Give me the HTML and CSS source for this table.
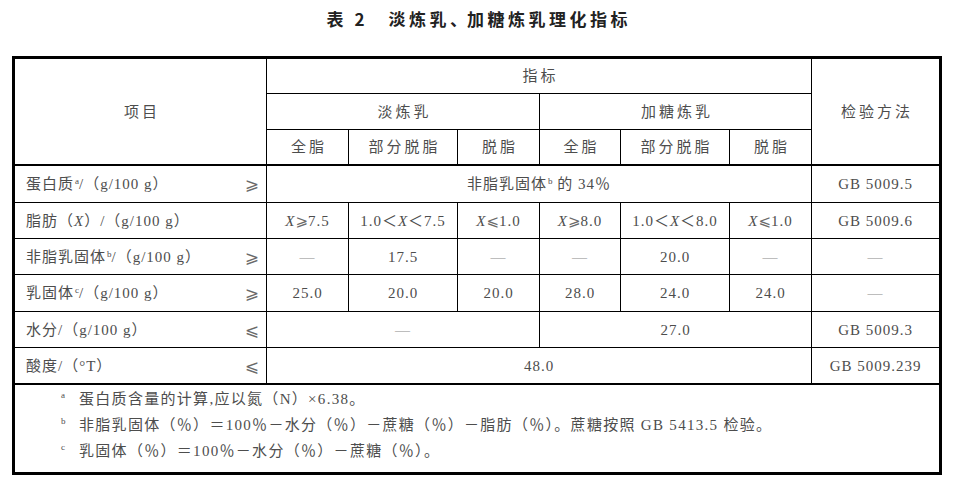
FILE: index.html
```html
<!DOCTYPE html>
<html lang="zh-CN">
<head>
<meta charset="utf-8">
<title>表 2 淡炼乳、加糖炼乳理化指标</title>
<link rel="stylesheet" href="styles.css">
</head>
<body>
<div class="page">
  <h1 class="title">表 2　淡炼乳<span class="dun">、</span>加糖炼乳理化指标</h1>
  <table class="spec">
    <colgroup>
      <col class="c-item"><col class="c-a"><col class="c-b"><col class="c-a"><col class="c-d"><col class="c-b"><col class="c-a"><col class="c-m">
    </colgroup>
    <thead>
      <tr class="r35">
        <th rowspan="3" class="thick-b">项目</th>
        <th colspan="6">指标</th>
        <th rowspan="3" class="thick-b last">检验方法</th>
      </tr>
      <tr class="r36">
        <th colspan="3">淡炼乳</th>
        <th colspan="3">加糖炼乳</th>
      </tr>
      <tr class="r36">
        <th class="thick-b">全脂</th>
        <th class="thick-b">部分脱脂</th>
        <th class="thick-b">脱脂</th>
        <th class="thick-b">全脂</th>
        <th class="thick-b">部分脱脂</th>
        <th class="thick-b">脱脂</th>
      </tr>
    </thead>
    <tbody>
      <tr class="r37">
        <td><div class="item"><span>蛋白质<sup class="sx">a</sup>/（g/100 g）</span><span class="rel">⩾</span></div></td>
        <td colspan="6">非脂乳固体<sup class="sx">b</sup> 的 34％</td>
        <td class="last">GB 5009.5</td>
      </tr>
      <tr class="r36">
        <td><div class="item"><span>脂肪（<i>X</i>）/（g/100 g）</span></div></td>
        <td><i>X</i><span class="rel">⩾</span>7.5</td>
        <td>1.0＜<i>X</i>＜7.5</td>
        <td><i>X</i><span class="rel">⩽</span>1.0</td>
        <td><i>X</i><span class="rel">⩾</span>8.0</td>
        <td>1.0＜<i>X</i>＜8.0</td>
        <td><i>X</i><span class="rel">⩽</span>1.0</td>
        <td class="last">GB 5009.6</td>
      </tr>
      <tr class="r36">
        <td><div class="item"><span>非脂乳固体<sup class="sx">b</sup>/（g/100 g）</span><span class="rel">⩾</span></div></td>
        <td class="dash">—</td>
        <td>17.5</td>
        <td class="dash">—</td>
        <td class="dash">—</td>
        <td>20.0</td>
        <td class="dash">—</td>
        <td class="last dash">—</td>
      </tr>
      <tr class="r37">
        <td><div class="item"><span>乳固体<sup class="sx">c</sup>/（g/100 g）</span><span class="rel">⩾</span></div></td>
        <td>25.0</td>
        <td>20.0</td>
        <td>20.0</td>
        <td>28.0</td>
        <td>24.0</td>
        <td>24.0</td>
        <td class="last dash">—</td>
      </tr>
      <tr class="r36">
        <td><div class="item"><span>水分/（g/100 g）</span><span class="rel">⩽</span></div></td>
        <td colspan="3" class="dash">—</td>
        <td colspan="3">27.0</td>
        <td class="last">GB 5009.3</td>
      </tr>
      <tr class="r37">
        <td class="thick-b"><div class="item"><span>酸度/（°T）</span><span class="rel">⩽</span></div></td>
        <td colspan="6" class="thick-b">48.0</td>
        <td class="thick-b last">GB 5009.239</td>
      </tr>
      <tr class="r87">
        <td colspan="8" class="notes">
          <div class="note"><sup class="mark">a</sup><span>蛋白质含量的计算,应以氮（N）×6.38。</span></div>
          <div class="note"><sup class="mark">b</sup><span>非脂乳固体（％）＝100％－水分（％）－蔗糖（％）－脂肪（％）。蔗糖按照 GB 5413.5 检验。</span></div>
          <div class="note"><sup class="mark">c</sup><span>乳固体（％）＝100％－水分（％）－蔗糖（％）。</span></div>
        </td>
      </tr>
    </tbody>
  </table>
</div>
</body>
</html>
```

FILE: styles.css
```css
html, body {
  margin: 0;
  padding: 0;
  background: #fff;
}

body {
  font-family: "Liberation Serif", "Noto Sans CJK SC", serif;
  color: #4d4d4d;
}

.page {
  width: 930px;
  padding-left: 12px;
}

.title {
  margin: 0 0 26px;
  padding-top: 8px;
  height: 22px;
  line-height: 22px;
  font-family: "Noto Sans CJK SC", sans-serif;
  font-size: 17px;
  font-weight: 700;
  letter-spacing: 3.5px;
  text-indent: 3.5px;
  text-align: center;
  color: #222;
}

.dun {
  letter-spacing: 0;
}

.spec {
  width: 930px;
  table-layout: fixed;
  border-collapse: separate;
  border-spacing: 0;
  border: 3px solid #000;
  font-size: 15px;
  letter-spacing: 1px;
}

.c-item { width: 252px; }
.c-a { width: 82px; }
.c-b { width: 109px; }
.c-d { width: 81px; }
.c-m { width: 127px; }

.spec th,
.spec td {
  padding: 0;
  border-right: 1px solid #000;
  border-bottom: 1px solid #000;
  text-align: center;
  vertical-align: middle;
  white-space: nowrap;
  font-weight: normal;
  line-height: 20px;
}

.spec th {
  letter-spacing: 3px;
  text-indent: 3px;
}

.spec .last {
  border-right: none;
}

.spec .thick-b {
  border-bottom-width: 2px;
}

.r35 { height: 35px; }
.r36 { height: 36px; }
.r37 { height: 37px; }
.r87 { height: 87px; }

.item {
  display: flex;
  justify-content: space-between;
  align-items: center;
  padding: 0 7px 0 11px;
  text-align: left;
}

.rel {
  font-family: "DejaVu Sans", "Noto Sans CJK SC", sans-serif;
  font-size: 15px;
  letter-spacing: 0;
  color: #6a6a6a;
}

.item .rel {
  font-size: 17px;
}

.sx {
  font-size: 9px;
  line-height: 0;
  vertical-align: 5px;
  letter-spacing: 0;
  margin-left: 1px;
}

.dash {
  color: #8a8a8a;
}

.spec td.notes {
  border-right: none;
  border-bottom: none;
  vertical-align: top;
  text-align: left;
  padding: 1px 0 0 46px;
  letter-spacing: 1.3px;
}

.note {
  display: flex;
  align-items: flex-start;
  height: 26px;
  line-height: 26px;
}

.mark {
  width: 18px;
  flex: none;
  font-size: 9px;
  line-height: 18px;
  vertical-align: top;
  letter-spacing: 0;
}
```
